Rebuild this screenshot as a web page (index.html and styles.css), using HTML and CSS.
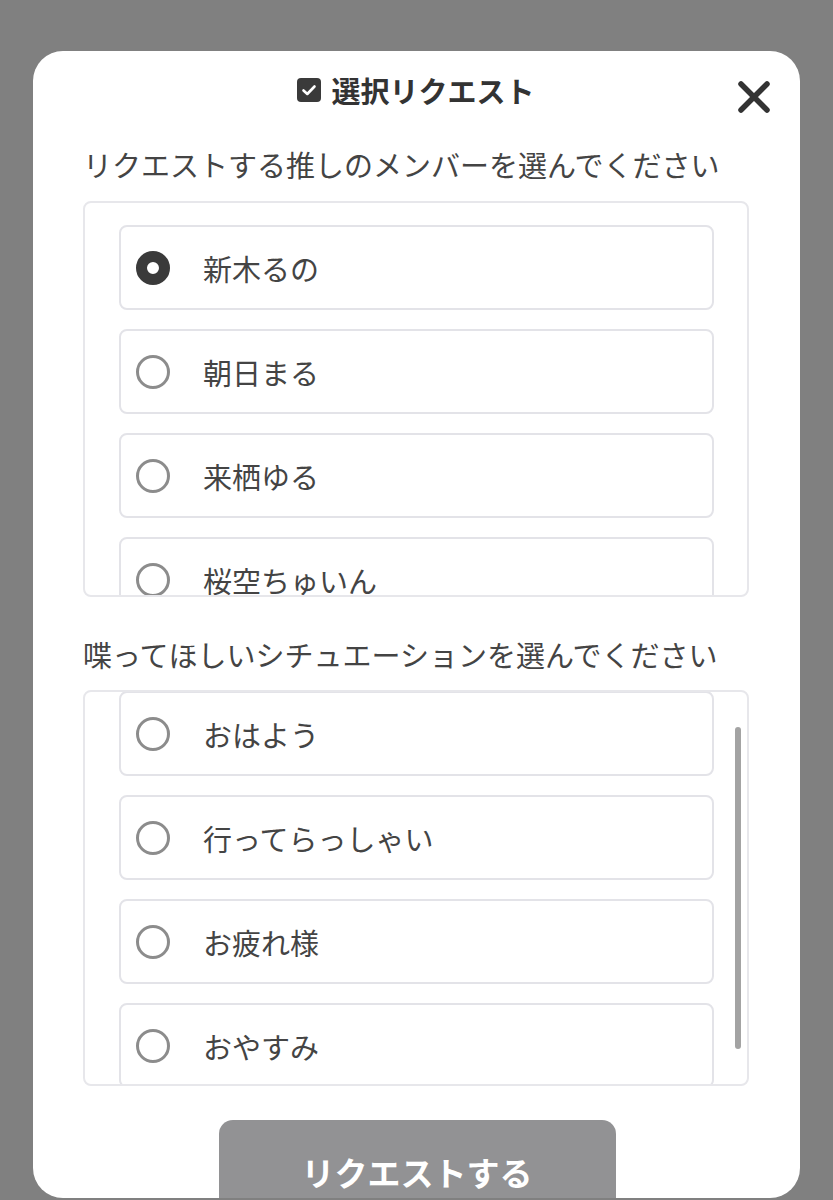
FILE: index.html
```html
<!DOCTYPE html>
<html lang="ja">
<head>
<meta charset="utf-8">
<title>選択リクエスト</title>
<link rel="stylesheet" href="styles.css">
</head>
<body>
<div class="modal">
  <header class="modal-head">
    <div class="title">
      <svg class="title-icon" viewBox="0 0 24 24" width="24" height="24" aria-hidden="true">
        <rect x="0" y="0" width="24" height="24" rx="4" fill="#3a3a3a"/>
        <path d="M6.5 12.5 L10.3 16 L17.5 8.5" fill="none" stroke="#fff" stroke-width="2.6" stroke-linecap="round" stroke-linejoin="round"/>
      </svg>
      <span>選択リクエスト</span>
    </div>
    <button class="close" aria-label="閉じる">
      <svg viewBox="0 0 34 34" width="34" height="34" aria-hidden="true">
        <path d="M4 4 L30 30 M30 4 L4 30" stroke="#333" stroke-width="5.5" stroke-linecap="round"/>
      </svg>
    </button>
  </header>

  <p class="label">リクエストする推しのメンバーを選んでください</p>
  <div class="listbox">
    <div class="list">
      <label class="item"><span class="radio checked"></span><span class="item-text">新木るの</span></label>
      <label class="item"><span class="radio"></span><span class="item-text">朝日まる</span></label>
      <label class="item"><span class="radio"></span><span class="item-text">来栖ゆる</span></label>
      <label class="item"><span class="radio"></span><span class="item-text">桜空ちゅいん</span></label>
    </div>
  </div>

  <p class="label">喋ってほしいシチュエーションを選んでください</p>
  <div class="listbox listbox-scrolled">
    <div class="list">
      <label class="item"><span class="radio"></span><span class="item-text">おはよう</span></label>
      <label class="item"><span class="radio"></span><span class="item-text">行ってらっしゃい</span></label>
      <label class="item"><span class="radio"></span><span class="item-text">お疲れ様</span></label>
      <label class="item"><span class="radio"></span><span class="item-text">おやすみ</span></label>
    </div>
    <div class="scrollbar"></div>
  </div>

  <div class="actions">
    <button class="submit">リクエストする</button>
  </div>
</div>
</body>
</html>
```

FILE: styles.css
```css
html, body {
  margin: 0;
  padding: 0;
}
body {
  background: #808080;
  font-family: "Noto Sans CJK JP", "Noto Sans", sans-serif;
  color: #424242;
  height: 1200px;
  overflow: hidden;
}
.modal {
  margin: 51px 33px 0;
  height: 1147px;
  background: #fff;
  border-radius: 30px;
  overflow: hidden;
  padding: 19px 51px 0 50px;
  box-sizing: border-box;
}
.modal-head {
  display: grid;
  grid-template-columns: 1fr auto 1fr;
  align-items: start;
  height: 40px;
}
.title {
  grid-column: 2;
  display: flex;
  align-items: center;
  gap: 10px;
  height: 40px;
  font-size: 29px;
  font-weight: 700;
  color: #333;
  line-height: 40px;
}
.title-icon {
  display: block;
  flex: none;
}
.close {
  grid-column: 3;
  justify-self: end;
  margin: 10px -22px 0 0;
  padding: 0;
  border: 0;
  background: none;
  width: 34px;
  height: 34px;
}
.close svg {
  display: block;
}
.label {
  margin: 34px 0 17px 0;
  font-size: 29px;
  line-height: 40px;
  color: #444;
  white-space: nowrap;
}
.listbox + .label {
  margin-top: 37px;
  margin-bottom: 16px;
}
.listbox {
  position: relative;
  height: 396px;
  box-sizing: border-box;
  border: 2px solid #e7e7eb;
  border-radius: 8px;
  overflow: hidden;
}
.list {
  display: flex;
  flex-direction: column;
  gap: 19px;
  padding: 22px 33px 22px 34px;
}
.listbox-scrolled .list {
  padding-top: 0;
  margin-top: -1px;
}
.item {
  display: flex;
  align-items: center;
  height: 85px;
  flex: none;
  box-sizing: border-box;
  border: 2px solid #e3e3e8;
  border-radius: 8px;
  padding-left: 15px;
  gap: 33px;
}
.radio {
  width: 34px;
  height: 34px;
  box-sizing: border-box;
  border: 3px solid #8c8c8c;
  border-radius: 50%;
  flex: none;
}
.radio.checked {
  border: 11px solid #3a3a3a;
  background: #fff;
}
.item-text {
  font-size: 29px;
  color: #444;
  line-height: 40px;
}
.scrollbar {
  position: absolute;
  right: 6px;
  top: 35px;
  width: 6px;
  height: 322px;
  border-radius: 3px;
  background: #a3a3a3;
}
.actions {
  display: flex;
  justify-content: center;
  margin-top: 34px;
}
.submit {
  width: 397px;
  height: 104px;
  margin-left: 2px;
  border: 0;
  border-radius: 14px;
  background: #929294;
  color: #fff;
  font-family: "Noto Sans CJK JP", "Noto Sans", sans-serif;
  font-size: 33px;
  font-weight: 700;
  padding: 0;
  flex: none;
}
```
